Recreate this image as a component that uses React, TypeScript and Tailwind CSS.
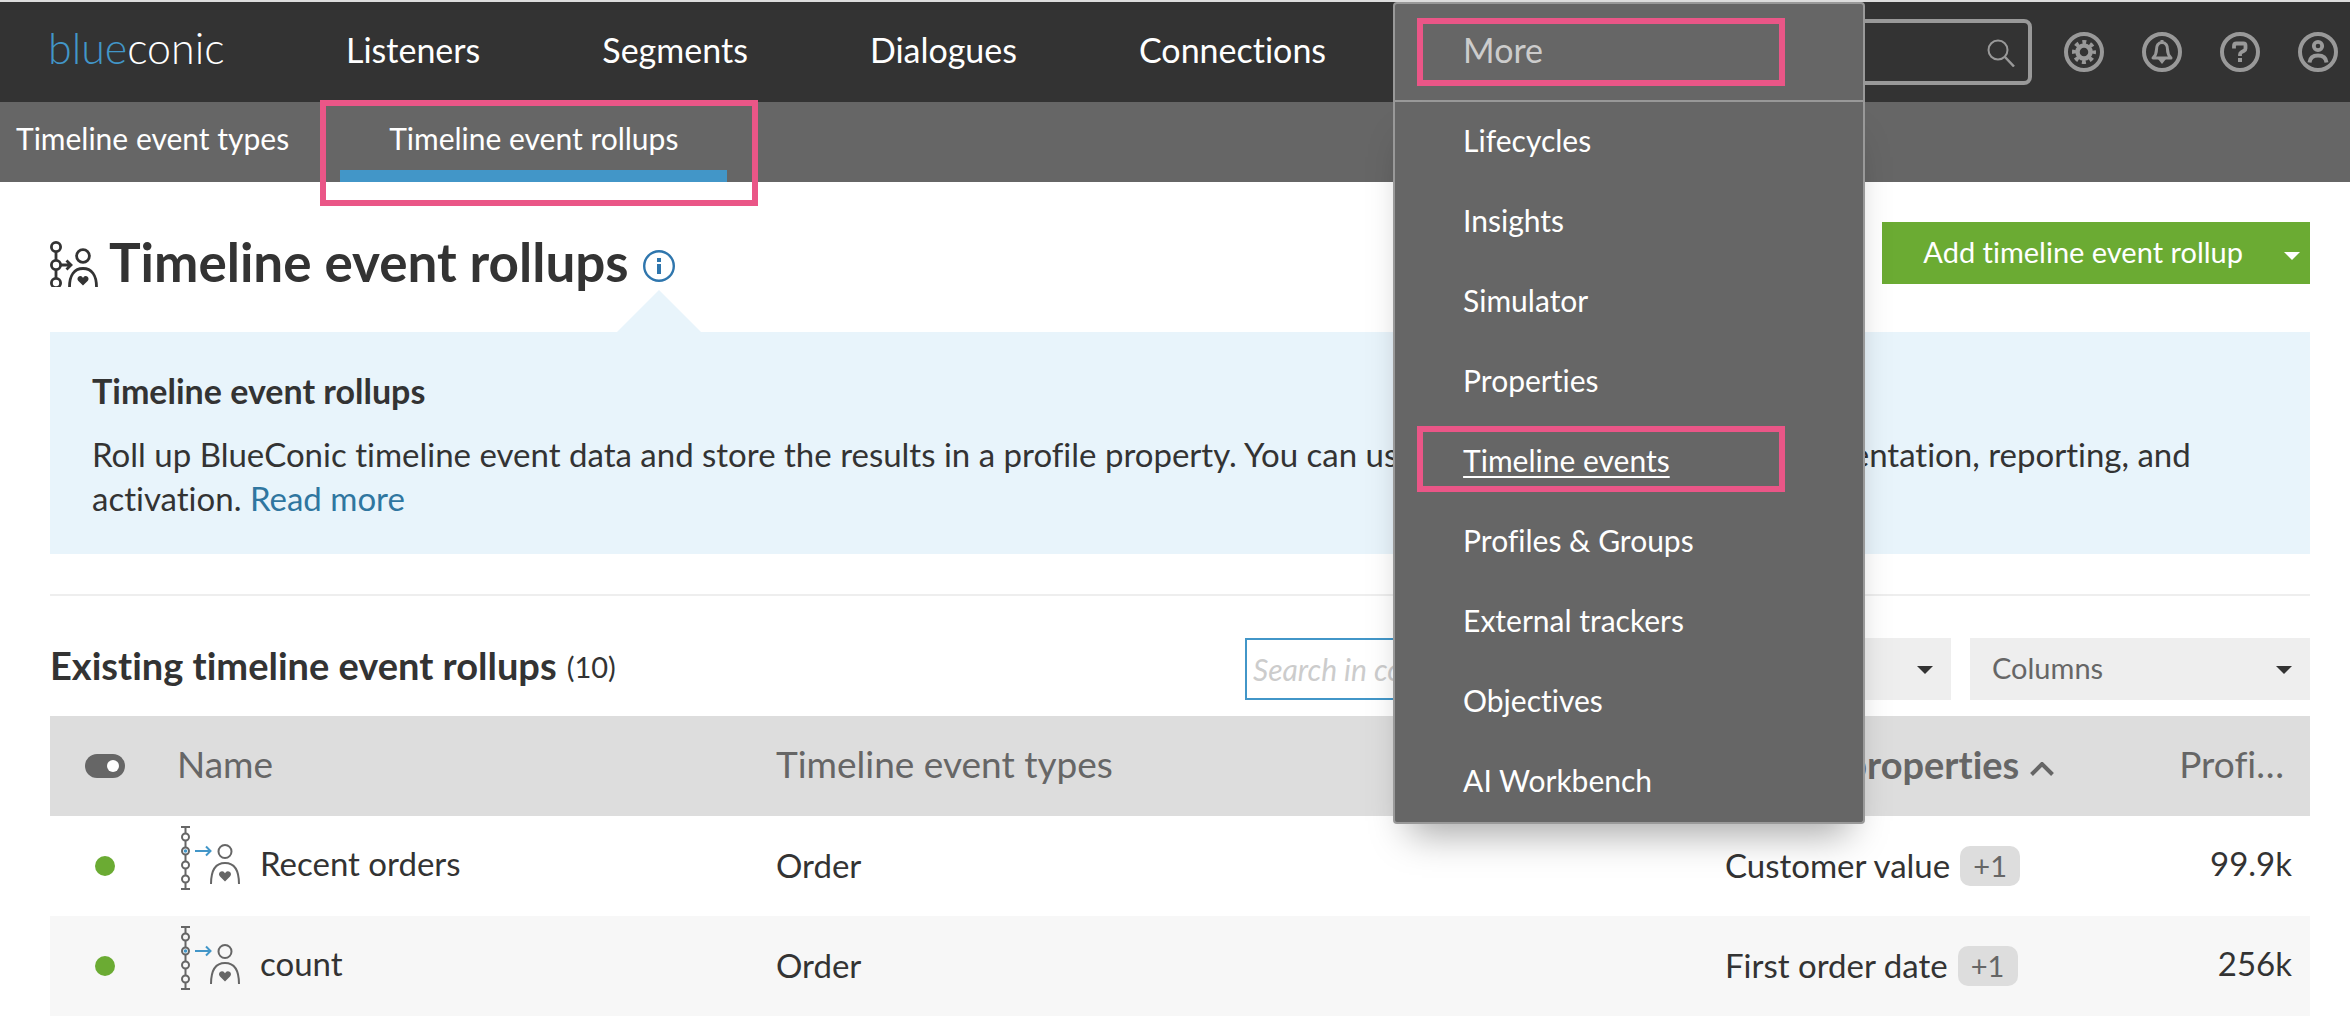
import type { ReactNode } from "react";

const navItems = ["Listeners", "Segments", "Dialogues", "Connections"];

const menuItems = [
  "Lifecycles",
  "Insights",
  "Simulator",
  "Properties",
  "Timeline events",
  "Profiles & Groups",
  "External trackers",
  "Objectives",
  "AI Workbench",
];

const rows = [
  { name: "Recent orders", types: "Order", property: "Customer value", extra: "+1", profiles: "99.9k" },
  { name: "count", types: "Order", property: "First order date", extra: "+1", profiles: "256k" },
];

function Highlight({ className }: { className: string }) {
  return <span aria-hidden className={`pointer-events-none absolute border-[6px] border-[#ea5687] ${className}`} />;
}

function Caret({ className }: { className: string }) {
  return (
    <svg aria-hidden viewBox="0 0 16 8" className={`h-[8px] w-[16px] ${className}`}>
      <path d="M0 0h16L8 8z" fill="currentColor" />
    </svg>
  );
}

function IconButton({ label, children }: { label: string; children: ReactNode }) {
  return (
    <button type="button" aria-label={label} className="size-[40px] text-[#999]">
      <svg viewBox="0 0 40 40" className="size-full" fill="none" stroke="currentColor">
        <circle cx="20" cy="20" r="18" strokeWidth="4" />
        {children}
      </svg>
    </button>
  );
}

function TitleIcon() {
  return (
    <svg aria-hidden viewBox="0 0 48 46" className="mt-[4px] h-[46px] w-[48px] shrink-0" fill="none" stroke="#333" strokeWidth="2.8">
      <circle cx="6" cy="6" r="4.6" />
      <circle cx="6" cy="24" r="4.6" />
      <circle cx="6" cy="42" r="4.6" />
      <path d="M6 11v8M6 29v8M11 24h9M16.500 19.500L21 24l-4.500 4.500" />
      <circle cx="33" cy="15" r="6.400" />
      <path d="M19.500 46c0-12 5-18.500 13.500-18.500S46.500 34 46.500 46" />
      <path
        d="M33 44.500l-4.600-4.600c-1.300-1.300-1.200-3.200 0-4.200 1.300-1 3.100-.8 4 .4l.6.8.6-.8c.9-1.200 2.700-1.400 4-.4 1.200 1 1.300 2.900 0 4.200z"
        fill="#333"
        stroke="none"
      />
    </svg>
  );
}

function RollupIcon() {
  return (
    <svg aria-hidden viewBox="0 0 64 68" className="mb-[16px] h-[68px] w-[64px] shrink-0" fill="none" stroke="#666" strokeWidth="2">
      <path d="M3 3h9M3 65h9M7.500 3v6M7.500 17v6M7.500 31v6M7.500 45v6M7.500 59v6" />
      <circle cx="7.500" cy="13" r="3.500" />
      <circle cx="7.500" cy="27" r="3.500" />
      <circle cx="7.500" cy="27" r="1.800" fill="#4296c8" stroke="none" />
      <circle cx="7.500" cy="41" r="3.500" />
      <circle cx="7.500" cy="55" r="3.500" />
      <path d="M17 27h15M28 22.500l4.500 4.500-4.500 4.500" stroke="#4296c8" />
      <circle cx="47" cy="27.500" r="6.500" />
      <path d="M33 60c0-14 5-21 14-21s14 7 14 21" />
      <path
        d="M47 57.500l-5-5c-1.400-1.400-1.300-3.400 0-4.500 1.400-1.100 3.400-.9 4.400.4l.6.900.6-.9c1-1.300 3-1.500 4.400-.4 1.300 1.100 1.400 3.100 0 4.500z"
        fill="#666"
        stroke="none"
      />
    </svg>
  );
}

function MoreMenu() {
  return (
    <div className="relative z-10 w-[472px] shrink-0 self-stretch">
      <button
        type="button"
        aria-expanded="true"
        className="relative flex h-full w-full items-center rounded-t-[4px] border-2 border-[#999] bg-[#666] pb-[6px] pl-[68px] text-[#ccc]"
      >
        More
        <Highlight className="top-[14px] right-[78px] bottom-[14px] left-[22px]" />
      </button>
      <ul className="absolute inset-x-0 top-full rounded-b-[4px] border-2 border-t-0 border-[#999] bg-[#666] text-[30px] shadow-[0_26px_36px_-16px_rgba(0,0,0,0.35)]">
        {menuItems.map((item) => (
          <li key={item} className="relative flex h-[80px] items-center pb-[4px] pl-[68px]">
            <a href="#" className={item === "Timeline events" ? "underline decoration-2 underline-offset-4" : ""}>
              {item}
            </a>
            {item === "Timeline events" && <Highlight className="top-[4px] right-[78px] bottom-[10px] left-[22px]" />}
          </li>
        ))}
      </ul>
    </div>
  );
}

function Header() {
  return (
    <header className="text-white">
      <div className="flex h-[102px] items-center border-t-2 border-[#ddd] bg-[#333] pr-[12px] pl-[48px] text-[34px]">
        <a href="#" className="w-[237px] shrink-0 pb-[8px] text-[43px] font-light">
          <span className="text-[#4296c8]">blue</span>conic
        </a>
        <nav className="flex shrink-0 pr-[6px] pb-[6px]">
          {navItems.map((item) => (
            <a key={item} href="#" className="px-[61px]">
              {item}
            </a>
          ))}
        </nav>
        <MoreMenu />
        <form role="search" className="relative -ml-[10px] flex flex-1">
          <input
            type="search"
            aria-label="Search"
            className="h-[66px] w-full min-w-0 rounded-[8px] border-4 border-[#999] bg-transparent pr-[60px] text-[30px] outline-none"
          />
          <svg aria-hidden viewBox="0 0 28 28" className="absolute top-[20px] right-[17px] size-[28px]" fill="none" stroke="#999" strokeWidth="2">
            <circle cx="11" cy="11" r="9.500" />
            <path d="M18 18l9 9.500" strokeWidth="2.500" />
          </svg>
        </form>
        <div className="ml-[32px] flex shrink-0 gap-[38px]">
          <IconButton label="Settings">
            <circle cx="20" cy="20" r="6.500" strokeWidth="4.500" />
            <circle cx="20" cy="20" r="10" strokeWidth="4" strokeDasharray="3.927" strokeDashoffset="1.963" />
          </IconButton>
          <IconButton label="Notifications">
            <path d="M20 10.500c-4 0-5.500 3.500-5.500 7 0 4.500-1.500 6.500-3.500 8.500h18c-2-2-3.500-4-3.500-8.500 0-3.500-1.500-7-5.500-7z" strokeWidth="3" strokeLinejoin="round" />
            <path d="M16 27h8l-4 5zM18.500 8h3v3h-3z" fill="currentColor" stroke="none" />
          </IconButton>
          <IconButton label="Help">
            <path d="M14 16.500v-2.500q0-2.500 2.500-2.500h7q2 0 2 2v3q0 1.500-1.500 2.300l-2.500 1.400q-1.500.8-1.500 2.300v1.500" strokeWidth="3.800" />
            <path d="M18 26h4v4h-4z" fill="currentColor" stroke="none" />
          </IconButton>
          <IconButton label="Account">
            <circle cx="20" cy="14" r="4.200" strokeWidth="3.800" />
            <path d="M11.500 30.500c.5-5 4-7 8.500-7s8 2 8.500 7" strokeWidth="4" />
          </IconButton>
        </div>
      </div>
      <nav className="flex h-[80px] bg-[#666] pl-[16px] text-[30px]">
        <a href="#" className="flex items-center pr-[51px] pb-[8px]">
          Timeline event types
        </a>
        <a href="#" aria-current="page" className="relative flex items-center border-b-[12px] border-[#4296c8] px-[49px] pt-[4px]">
          Timeline event rollups
          <Highlight className="-top-[2px] -right-[31px] -bottom-[36px] -left-[20px]" />
        </a>
      </nav>
    </header>
  );
}

function ToolbarSelect({ label, className }: { label: string; className: string }) {
  return (
    <div className={`relative ${className}`}>
      <select aria-label={label} className="h-full w-full appearance-none bg-[#eee] pb-[2px] pl-[22px] text-[29px] text-[#666] outline-none">
        <option>{label}</option>
      </select>
      <Caret className="pointer-events-none absolute top-[28px] right-[18px] text-[#333]" />
    </div>
  );
}

function RollupTable() {
  return (
    <table className="mt-[16px] w-full table-fixed text-left text-[33px]">
      <colgroup>
        <col className="w-[110px]" />
        <col className="w-[616px]" />
        <col />
        <col className="w-[440px]" />
        <col className="w-[145px]" />
      </colgroup>
      <thead className="bg-[#ddd] text-[37px] text-[#666]">
        <tr className="h-[100px]">
          <th scope="col" aria-label="Status" className="pl-[35px]">
            <svg aria-hidden viewBox="0 0 40 24" className="h-[24px] w-[40px]">
              <rect width="40" height="24" rx="12" fill="#666" />
              <circle cx="28" cy="12" r="6" fill="#fff" />
            </svg>
          </th>
          <th scope="col" className="pb-[4px] pl-[17px] font-normal">Name</th>
          <th scope="col" className="pb-[4px] font-normal">Timeline event types</th>
          <th scope="col" aria-sort="ascending" className="pb-[4px] text-[38px] font-bold whitespace-nowrap">
            Profile properties
            <svg aria-hidden viewBox="0 0 24 14" className="ml-[11px] inline-block h-[14px] w-[24px]" fill="none" stroke="#666" strokeWidth="4">
              <path d="M1.500 12.500L12 2l10.500 10.500" />
            </svg>
          </th>
          <th scope="col" className="pr-[26px] pb-[4px] text-right font-normal">Profi…</th>
        </tr>
      </thead>
      <tbody>
        {rows.map((row) => (
          <tr key={row.name} className="h-[100px] even:bg-[#f7f7f7]">
            <td className="pl-[45px]">
              <span role="img" aria-label="On" className="block size-[20px] rounded-full bg-[#6bab33]" />
            </td>
            <td className="pl-[18px]">
              <div className="flex items-center gap-[18px]">
                <RollupIcon />
                <span className="pb-[4px]">{row.name}</span>
              </div>
            </td>
            <td>{row.types}</td>
            <td>
              <div className="flex items-center gap-[10px]">
                <span>{row.property}</span>
                <span className="flex h-[40px] w-[60px] items-center justify-center rounded-[10px] bg-[#ddd] text-[29px] text-[#666]">
                  {row.extra}
                </span>
              </div>
            </td>
            <td className="pr-[18px] pb-[4px] text-right">{row.profiles}</td>
          </tr>
        ))}
      </tbody>
    </table>
  );
}

export default function App() {
  return (
    <div className="min-h-screen bg-white font-['Lato',sans-serif] text-[#333] [font-variant-ligatures:none]">
      <Header />
      <main className="pt-[40px] pr-[40px] pl-[50px]">
        <div className="flex h-[110px] items-start justify-between">
          <div className="flex items-center pt-[8px]">
            <TitleIcon />
            <h1 className="ml-[11px] text-[53px] leading-[64px] font-bold">Timeline event rollups</h1>
            <span className="relative mt-[8px] ml-[14px] size-[32px]">
              <button type="button" aria-label="Info" className="block size-full">
                <svg viewBox="0 0 32 32" className="size-full" fill="#2f76ad">
                  <circle cx="16" cy="16" r="14.800" fill="none" stroke="#2f76ad" strokeWidth="2.400" />
                  <path d="M14 8h4v4h-4zM14 14h4v10h-4z" />
                </svg>
              </button>
              <svg aria-hidden viewBox="0 0 84 42" className="absolute top-[40px] left-1/2 h-[42px] w-[84px] -translate-x-1/2">
                <path d="M42 0l42 42H0z" fill="#e8f4fb" />
              </svg>
            </span>
          </div>
          <button type="button" className="flex h-[62px] items-center bg-[#6bab33] pr-[10px] pl-[41px] text-[29px] text-white">
            <span className="pb-[2px]">Add timeline event rollup</span>
            <Caret className="mt-[6px] ml-[41px]" />
          </button>
        </div>

        <section className="bg-[#e8f4fb] px-[42px] pt-[39px] pb-[34px] text-[33px]">
          <h2 className="text-[34px] leading-[40px] font-bold">Timeline event rollups</h2>
          <p className="mt-[21px] leading-[44px]">
            Roll up BlueConic timeline event data and store the results in a profile property. You can use these properties in
            your segmentation, reporting, and activation.{" "}
            <a href="#" className="text-[#2f76a0]">
              Read more
            </a>
          </p>
        </section>

        <hr className="mt-[40px] border-t-2 border-[#eee]" />

        <div className="mt-[42px] flex h-[62px] items-stretch">
          <h2 className="flex flex-1 items-center gap-[10px] pb-[8px] text-[38px] font-bold whitespace-nowrap">
            Existing timeline event rollups
            <span className="pt-[4px] text-[29px] font-normal">(10)</span>
          </h2>
          <input
            type="text"
            aria-label="Search in columns"
            placeholder="Search in columns"
            className="w-[340px] border-2 border-[#4296c8] bg-white pl-[6px] text-[30px] outline-none placeholder:text-[#ccc] placeholder:italic"
          />
          <ToolbarSelect label="Filter" className="ml-[19px] w-[347px]" />
          <ToolbarSelect label="Columns" className="ml-[19px] w-[340px]" />
        </div>

        <RollupTable />
      </main>
    </div>
  );
}
